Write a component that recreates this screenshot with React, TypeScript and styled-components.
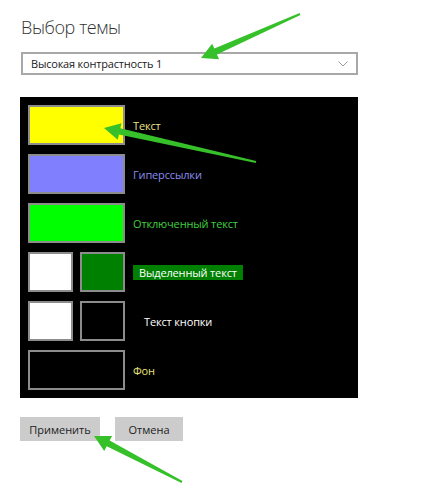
import React from 'react'
import styled, { createGlobalStyle } from 'styled-components'

const GlobalStyle = createGlobalStyle`
  html, body {
    margin: 0;
    padding: 0;
    background: #ffffff;
  }
  body {
    font-family: "Open Sans", "Noto Sans", "Liberation Sans", sans-serif;
  }
`

const Page = styled.div`
  position: relative;
  width: 424px;
  height: 491px;
  box-sizing: border-box;
  padding: 15px 0 0 20px;
  overflow: hidden;
`

const Title = styled.h1`
  margin: 0 0 0 1px;
  font-size: 18px;
  line-height: 25px;
  font-weight: 300;
  letter-spacing: -0.4px;
  color: #333;
`

const Select = styled.div`
  margin: 12px 0 0 1px;
  width: 337px;
  height: 23px;
  box-sizing: border-box;
  border: 2px solid #a8a8a8;
  display: flex;
  align-items: center;
  justify-content: space-between;
  padding: 0 8px 0 8px;
  font-size: 11px;
  letter-spacing: -0.2px;
  color: #1a1a1a;
`

const Chevron = styled.svg`
  width: 10px;
  height: 6px;
`

const Panel = styled.div`
  margin-top: 22px;
  width: 338px;
  height: 301px;
  box-sizing: border-box;
  background: #000;
  padding: 8px;
  display: flex;
  flex-direction: column;
  gap: 9px;
`

const Row = styled.div`
  display: grid;
  grid-template-columns: 97px auto;
  column-gap: 8px;
  align-items: center;
  height: 40px;
`

const Pair = styled.div`
  display: flex;
  gap: 7px;
`

const Swatch = styled.div<{ $bg: string; $wide?: boolean }>`
  width: ${p => (p.$wide ? '97px' : '45px')};
  height: 40px;
  box-sizing: border-box;
  border: 2px solid #8c8c8c;
  background: ${p => p.$bg};
`

const Label = styled.span<{ $color: string; $bg?: string; $indent?: number }>`
  justify-self: start;
  font-size: 11px;
  line-height: 15px;
  letter-spacing: -0.15px;
  color: ${p => p.$color};
  background: ${p => p.$bg || 'transparent'};
  padding: ${p => (p.$bg ? '0 6px' : '0')};
  margin-left: ${p => p.$indent || 0}px;
`

const Buttons = styled.div`
  margin-top: 19px;
  display: flex;
  gap: 15px;
`

const Button = styled.button<{ $w: number }>`
  width: ${p => p.$w}px;
  height: 24px;
  border: none;
  background: #cccccc;
  font-family: inherit;
  font-size: 11px;
  color: #222;
  padding: 0;
`

const Overlay = styled.svg`
  position: absolute;
  left: 0;
  top: 0;
  width: 424px;
  height: 491px;
  pointer-events: none;
`

type Pt = [number, number]

const arrowPoints = (tail: Pt, tip: Pt) => {
  const dx = tip[0] - tail[0]
  const dy = tip[1] - tail[1]
  const len = Math.hypot(dx, dy)
  const ux = dx / len
  const uy = dy / len
  const nx = -uy
  const ny = ux
  const head = 16
  const hw = 8.5
  const base: Pt = [tip[0] - ux * head, tip[1] - uy * head]
  const p = (c: Pt, w: number): string => `${c[0] + nx * w},${c[1] + ny * w}`
  return [
    p(tail, 1),
    p(base, 3.2),
    p(base, hw),
    `${tip[0]},${tip[1]}`,
    p(base, -hw),
    p(base, -3.2),
    p(tail, -1)
  ].join(' ')
}

const arrows: [Pt, Pt][] = [
  [[300, 14], [201, 58]],
  [[256, 162], [104, 128]],
  [[182, 482], [94, 436]]
]

export default function App() {
  return (
    <Page>
      <GlobalStyle />
      <Title>Выбор темы</Title>
      <Select>
        <span>Высокая контрастность 1</span>
        <Chevron viewBox="0 0 10 6">
          <path d="M0.5 0.5 L5 5 L9.5 0.5" fill="none" stroke="#9a9a9a" strokeWidth="1" />
        </Chevron>
      </Select>
      <Panel>
        <Row>
          <Swatch $bg="#ffff00" $wide />
          <Label $color="#e8e28a">Текст</Label>
        </Row>
        <Row>
          <Swatch $bg="#8080ff" $wide />
          <Label $color="#8c8cf0">Гиперссылки</Label>
        </Row>
        <Row>
          <Swatch $bg="#00ff00" $wide />
          <Label $color="#3fd03f">Отключенный текст</Label>
        </Row>
        <Row>
          <Pair>
            <Swatch $bg="#ffffff" />
            <Swatch $bg="#008000" />
          </Pair>
          <Label $color="#ffffff" $bg="#008000">Выделенный текст</Label>
        </Row>
        <Row>
          <Pair>
            <Swatch $bg="#ffffff" />
            <Swatch $bg="#000000" />
          </Pair>
          <Label $color="#ffffff" $indent={11}>Текст кнопки</Label>
        </Row>
        <Row>
          <Swatch $bg="#000000" $wide />
          <Label $color="#e8e07a">Фон</Label>
        </Row>
      </Panel>
      <Buttons>
        <Button $w={80}>Применить</Button>
        <Button $w={68}>Отмена</Button>
      </Buttons>
      <Overlay viewBox="0 0 424 491">
        {arrows.map(([tail, tip], i) => (
          <polygon key={i} points={arrowPoints(tail, tip)} fill="#36c02a" />
        ))}
      </Overlay>
    </Page>
  )
}
